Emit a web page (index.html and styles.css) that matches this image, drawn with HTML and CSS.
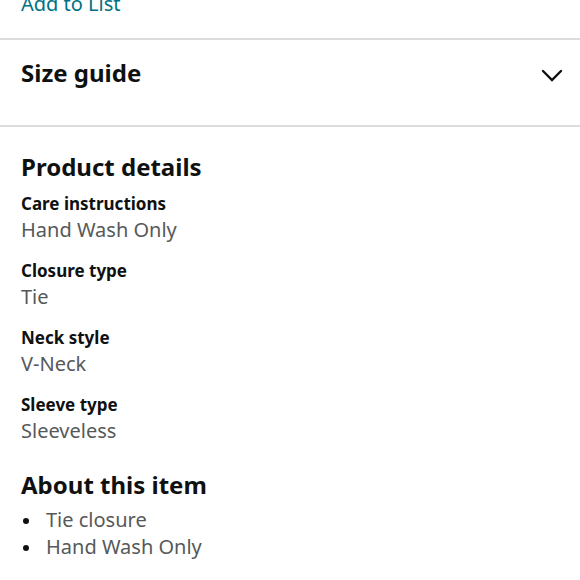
FILE: index.html
```html
<!DOCTYPE html>
<html>
<head>
<meta charset="utf-8">
<link rel="stylesheet" href="styles.css">
</head>
<body>
<div class="page">
  <div class="top">
    <a class="link">Add to List</a>
  </div>
  <div class="accordion">
    <span class="acc-title">Size guide</span>
    <svg class="chev" width="22" height="14" viewBox="0 0 22 14"><path d="M2 2 L11 11 L20 2" fill="none" stroke="#111" stroke-width="2.4" stroke-linecap="round" stroke-linejoin="miter"/></svg>
  </div>
  <div class="details">
    <h2 class="heading">Product details</h2>
    <dl class="attrs">
      <div class="attr"><dt>Care instructions</dt><dd>Hand Wash Only</dd></div>
      <div class="attr"><dt>Closure type</dt><dd>Tie</dd></div>
      <div class="attr"><dt>Neck style</dt><dd>V-Neck</dd></div>
      <div class="attr"><dt>Sleeve type</dt><dd>Sleeveless</dd></div>
    </dl>
    <h2 class="heading about">About this item</h2>
    <ul class="bullets">
      <li>Tie closure</li>
      <li>Hand Wash Only</li>
    </ul>
  </div>
</div>
</body>
</html>
```
FILE: styles.css
```css
html, body { margin: 0; padding: 0; background: #fff; }
body { font-family: "Noto Sans", "DejaVu Sans", sans-serif; color: #0f1111; }
.page { width: 580px; }
.top { height: 38px; padding-left: 21px; display: flex; align-items: flex-end; overflow: hidden; border-bottom: 2px solid #dcdcdc; }
.link { color: #007185; font-size: 20px; line-height: 28px; margin-bottom: 20px; }
.accordion { box-sizing: border-box; height: 87px; display: flex; align-items: flex-start; justify-content: space-between; padding: 15px 17px 0 21px; border-bottom: 2px solid #dcdcdc; }
.acc-title { font-size: 24px; font-weight: 700; line-height: 36px; }
.chev { display: block; margin-top: 14px; }
.details { padding: 22px 21px 0; }
.heading { margin: 0; font-size: 24px; font-weight: 700; line-height: 36px; }
.attrs { margin: 7px 0 0; }
.attr { margin-bottom: 15px; }
.attr dt { font-size: 17px; font-weight: 700; line-height: 24px; }
.attr dd { margin: 0; font-size: 20px; line-height: 28px; color: #565959; }
.about { margin-top: 22px; }
.bullets { margin: 3px 0 0; padding: 0; list-style: none; font-size: 20px; line-height: 27px; color: #565959; }
.bullets li { display: flex; align-items: center; }
.bullets li::before { content: ""; width: 6px; height: 6px; border-radius: 50%; background: #0f1111; margin: 2px 17px 0 2px; flex: none; }
```
